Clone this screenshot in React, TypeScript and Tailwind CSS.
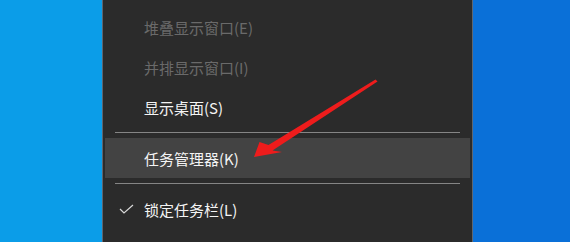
import React from "react";

/**
 * 任务栏右键菜单截图复刻
 * 深色菜单 + 红色箭头指向“任务管理器”
 */
type Item = { label: string; disabled?: boolean; checked?: boolean; active?: boolean; gear?: boolean };

const font = { fontFamily: '"Noto Sans CJK SC", "Noto Sans", sans-serif' };

function Row({ item }: { item: Item }) {
  const color = item.disabled ? "text-[#6a6a6a]" : "text-[#f4f4f4]";
  return (
    <div className="shrink-0 px-[2px]">
      <div
        className={`flex items-center h-[40px] pl-[14px] text-[15px] ${color} ${
          item.active ? "bg-[#434343]" : ""
        }`}
      >
        <div className="w-[25px] flex items-center">
          {item.checked && (
            <svg width="15" height="10" viewBox="0 0 15 10" fill="none">
              <path d="M1 5 L5 9 L14 1" stroke="#d8d8d8" strokeWidth="1.2" />
            </svg>
          )}
          {item.gear && (
            <svg width="14" height="14" viewBox="0 0 14 14" fill="none">
              <circle cx="7" cy="7" r="4.5" stroke="#d8d8d8" strokeWidth="1.4" strokeDasharray="2 1.5" />
              <circle cx="7" cy="7" r="2" stroke="#d8d8d8" strokeWidth="1.2" />
            </svg>
          )}
        </div>
        <span className="leading-none">{item.label}</span>
      </div>
    </div>
  );
}

function Separator() {
  return (
    <div className="shrink-0 h-[11px] flex items-center px-[12px]">
      <div className="h-px w-full bg-[#858585]" />
    </div>
  );
}

export default function App() {
  return (
    <div className="relative w-[570px] h-[242px] overflow-hidden flex" style={font}>
      <div className="w-[102px] h-full bg-[#0b9de8]" />
      <div className="w-[371px] h-full overflow-hidden bg-[#2b2b2b] border-x border-[#5e6670] flex flex-col pt-[7px]">
        <Row item={{ label: "堆叠显示窗口(E)", disabled: true }} />
        <Row item={{ label: "并排显示窗口(I)", disabled: true }} />
        <Row item={{ label: "显示桌面(S)" }} />
        <Separator />
        <Row item={{ label: "任务管理器(K)", active: true }} />
        <Separator />
        <Row item={{ label: "锁定任务栏(L)", checked: true }} />
        <Row item={{ label: "任务栏设置(T)", gear: true }} />
      </div>
      <div className="flex-1 h-full bg-[#0a70d8]" />

      {/* 红色指示箭头 */}
      <svg className="absolute left-0 top-0" width="570" height="242" viewBox="0 0 570 242">
        <polygon
          points="254,157 259.5,142 268.5,145 375.5,79.5 377.5,81.5 272.5,150.5 282,152"
          fill="#ee1c1c"
        />
      </svg>
    </div>
  );
}
